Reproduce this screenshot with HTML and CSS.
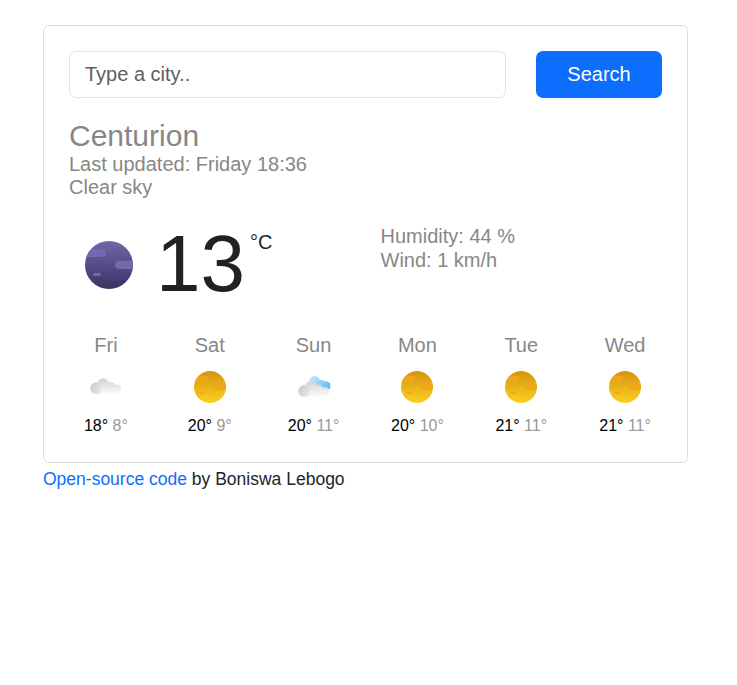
FILE: index.html
```html
<!DOCTYPE html>
<html lang="en">
<head>
<meta charset="utf-8">
<title>Weather</title>
<link rel="stylesheet" href="styles.css">
</head>
<body>
<svg class="defs" width="0" height="0">
  <defs>
    <linearGradient id="moonFill" x1="0" y1="0" x2="0" y2="1"><stop offset="0" stop-color="#7266ab"/><stop offset="1" stop-color="#3b3163"/></linearGradient>
    <linearGradient id="sunFill" x1="0" y1="0" x2="0" y2="1"><stop offset="0" stop-color="#d6950f"/><stop offset="1" stop-color="#fecf20"/></linearGradient>
    <linearGradient id="cloudFill" gradientUnits="userSpaceOnUse" x1="0" y1="1" x2="0" y2="17"><stop offset="0" stop-color="#d2d2d2"/><stop offset="1" stop-color="#fdfdfd"/></linearGradient>
    <linearGradient id="puffFill" x1="0" y1="0.2" x2="1" y2="0.8"><stop offset="0" stop-color="#c9c9c9"/><stop offset="1" stop-color="#ebebeb"/></linearGradient>
    <linearGradient id="blueFill" gradientUnits="userSpaceOnUse" x1="12" y1="6" x2="29" y2="18"><stop offset="0" stop-color="#c5e9fd"/><stop offset="1" stop-color="#62bff5"/></linearGradient>
    <clipPath id="disc"><circle cx="24" cy="24" r="24"/></clipPath>
    <symbol id="sun" viewBox="0 0 48 48">
      <g clip-path="url(#disc)"><rect width="48" height="48" fill="url(#sunFill)"/>
      <g fill="#f0a51a"><rect x="-6" y="8" width="27" height="8" rx="4"/><rect x="30" y="20" width="26" height="8" rx="4"/><rect x="8" y="32" width="8" height="3" rx="1.5"/></g></g>
    </symbol>
    <symbol id="cloud" viewBox="0 0 32 20">
      <g fill="url(#cloudFill)"><circle cx="13" cy="6.500" r="5.800"/><circle cx="20.500" cy="9" r="4.500"/><circle cx="27" cy="11.500" r="4.500"/><path d="M6 8 H28 V16 Q28 17 26 17 H6 Z"/></g>
      <circle cx="6.300" cy="10.700" r="6" fill="url(#puffFill)"/>
    </symbol>
  </defs>
</svg>
<main class="wrapper">
  <section class="card">
    <form class="search">
      <input class="city-input" type="text" placeholder="Type a city..">
      <button class="search-button" type="button">Search</button>
    </form>
    <header class="overview">
      <h1>Centurion</h1>
      <div>Last updated: Friday 18:36</div>
      <div>Clear sky</div>
    </header>
    <div class="current">
      <div class="now">
        <svg class="moon" viewBox="0 0 48 48">
          <g clip-path="url(#disc)"><rect width="48" height="48" fill="url(#moonFill)"/>
          <g fill="#7368ae"><rect x="-6" y="8" width="27" height="8" rx="4"/><rect x="30" y="20" width="26" height="8" rx="4"/><rect x="8" y="32" width="8" height="3" rx="1.5"/></g></g>
        </svg>
        <span class="degrees">13</span><span class="unit">°C</span>
      </div>
      <div class="details">
        <div>Humidity: 44 %</div>
        <div>Wind: 1 km/h</div>
      </div>
    </div>
    <div class="forecast">
      <div class="day"><div class="name">Fri</div><svg class="icon" viewBox="0 0 32 32"><use href="#cloud" y="6.500" width="32" height="20"/></svg><div class="range">18° <span>8°</span></div></div>
      <div class="day"><div class="name">Sat</div><svg class="icon"><use href="#sun"/></svg><div class="range">20° <span>9°</span></div></div>
      <div class="day"><div class="name">Sun</div><svg class="icon" viewBox="0 0 32 32"><g fill="url(#blueFill)"><circle cx="16.500" cy="10.500" r="5.500"/><circle cx="23" cy="13" r="4"/><circle cx="28" cy="14.500" r="4.200"/><path d="M15 12 H32.200 V18 H15 Z"/></g><use href="#cloud" y="9.200" width="32" height="20"/></svg><div class="range">20° <span>11°</span></div></div>
      <div class="day"><div class="name">Mon</div><svg class="icon"><use href="#sun"/></svg><div class="range">20° <span>10°</span></div></div>
      <div class="day"><div class="name">Tue</div><svg class="icon"><use href="#sun"/></svg><div class="range">21° <span>11°</span></div></div>
      <div class="day"><div class="name">Wed</div><svg class="icon"><use href="#sun"/></svg><div class="range">21° <span>11°</span></div></div>
    </div>
  </section>
  <footer class="credit"><a href="#">Open-source code</a> by Boniswa Lebogo</footer>
</main>
</body>
</html>
```
FILE: styles.css
```css
* { box-sizing: border-box; }
body { margin: 0; background: #fff; color: #212529; font-family: "Liberation Sans", Arial, sans-serif; font-size: 20px; }
.defs { display: block; }
.wrapper { width: 645px; margin: 25px 0 0 43px; }
.card { height: 438px; padding: 25px; border: 1px solid #dcdee2; border-radius: 6px; color: #878787; }
.search { display: flex; gap: 30px; margin: 0; }
.city-input { width: 437px; height: 47px; padding: 0 15px; border: 1px solid #dee2e6; border-radius: 7px; font: inherit; color: #212529; }
.city-input::placeholder { color: #5c6064; opacity: 1; }
.search-button { flex: 1; height: 47px; padding: 0; border: 0; border-radius: 7px; background: #0d6efd; color: #fff; font: inherit; }
.overview { margin-top: 20px; line-height: 23px; }
.overview h1 { margin: 0; font-size: 30px; font-weight: 400; line-height: 35px; }
.current { display: flex; height: 96px; margin-top: 25px; }
.now { display: flex; align-items: flex-start; width: 311.5px; padding-left: 16px; }
.moon { width: 48px; height: 48px; margin-top: 17px; }
.degrees { margin-left: 23px; color: #212121; font-size: 80px; line-height: 80px; }
.unit { margin-left: 5px; margin-top: 7px; color: #212529; line-height: 23px; }
.details { line-height: 24px; }
.forecast { display: grid; grid-template-columns: repeat(6, 1fr); margin: 14px -15px 0; text-align: center; }
.name { line-height: 23px; }
.icon { display: block; overflow: visible; width: 32px; height: 32px; margin: 13.5px auto; }
.range { color: #000; font-size: 16px; line-height: 20px; }
.range span { color: #999; }
.credit { margin-top: 5px; font-size: 17.5px; line-height: 22px; }
.credit a { color: #0d6efd; text-decoration: none; }
```
